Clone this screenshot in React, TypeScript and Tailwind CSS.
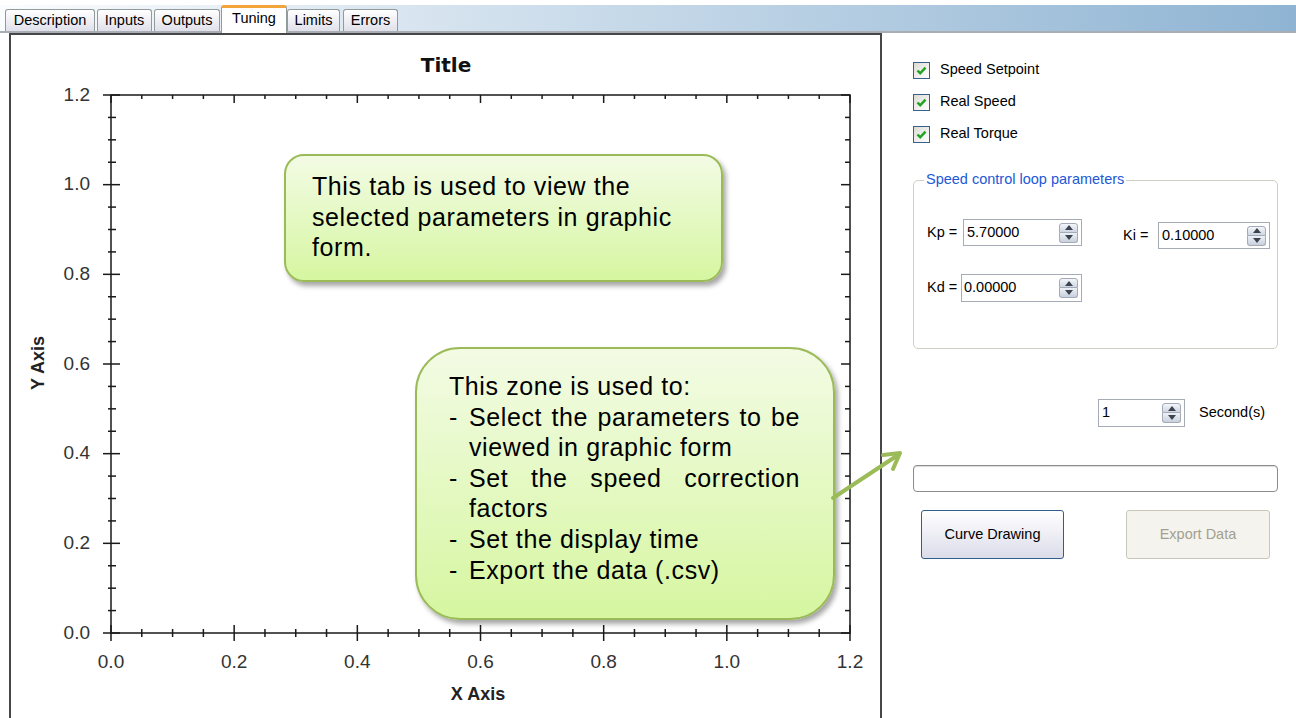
import React from "react";

const F = "font-['Liberation_Sans',Arial,sans-serif]";

const xs = Array.from({ length: 25 }, (_, j) => 111 + (j * 739) / 24);
const ys = Array.from({ length: 25 }, (_, j) => 633 - (j * 538) / 24);
const labels = ["0.0", "0.2", "0.4", "0.6", "0.8", "1.0", "1.2"];

function Chart() {
  return (
    <svg width={869} height={696} viewBox="11 35 869 696" className="block">
      <g stroke="#1a1a1a" strokeWidth={1.5} fill="none">
        <rect x={111} y={95} width={739} height={538} />
        {ys.map((y, j) =>
          j % 4 === 0 ? (
            <g key={"y" + j}>
              <line x1={103} x2={120} y1={y} y2={y} />
              <line x1={841} x2={850} y1={y} y2={y} />
            </g>
          ) : (
            <g key={"y" + j}>
              <line x1={108} x2={116} y1={y} y2={y} />
              <line x1={845} x2={850} y1={y} y2={y} />
            </g>
          )
        )}
        {xs.map((x, j) =>
          j % 4 === 0 ? (
            <g key={"x" + j}>
              <line x1={x} x2={x} y1={625} y2={641} />
              <line x1={x} x2={x} y1={95} y2={103} />
            </g>
          ) : (
            <g key={"x" + j}>
              <line x1={x} x2={x} y1={629} y2={637} />
              <line x1={x} x2={x} y1={95} y2={99} />
            </g>
          )
        )}
      </g>
      <g fill="#333" fontFamily="'Liberation Sans', Arial, sans-serif" fontSize={19}>
        {labels.map((t, i) => (
          <text key={"ly" + i} x={90} y={ys[i * 4] + 5.5} textAnchor="end">
            {t}
          </text>
        ))}
        {labels.map((t, i) => (
          <text key={"lx" + i} x={xs[i * 4]} y={668} textAnchor="middle">
            {t}
          </text>
        ))}
      </g>
      <text x={446} y={72} textAnchor="middle" fontFamily="'DejaVu Sans', sans-serif" fontWeight="bold" fontSize={20} fill="#111">
        Title
      </text>
      <text x={478} y={700} textAnchor="middle" fontFamily="'Liberation Sans', Arial, sans-serif" fontWeight="bold" fontSize={18} fill="#222">
        X Axis
      </text>
      <text x={44} y={363} textAnchor="middle" transform="rotate(-90 44 363)" fontFamily="'Liberation Sans', Arial, sans-serif" fontWeight="bold" fontSize={18} fill="#222">
        Y Axis
      </text>
    </svg>
  );
}

function Spin() {
  return (
    <div className="flex flex-col w-[19px] h-[20px]">
      <div className="h-[10px] flex items-center justify-center rounded-t-[3px] border border-[#a3aab8] bg-linear-to-b from-[#f4f6fa] to-[#cfd6e2]">
        <svg width="8" height="5" viewBox="0 0 8 5">
          <polygon points="4,0 8,5 0,5" fill="#3b4250" />
        </svg>
      </div>
      <div className="h-[10px] flex items-center justify-center rounded-b-[3px] border border-t-0 border-[#a3aab8] bg-linear-to-b from-[#eef1f6] to-[#c9d1de]">
        <svg width="8" height="5" viewBox="0 0 8 5">
          <polygon points="0,0 8,0 4,5" fill="#3b4250" />
        </svg>
      </div>
    </div>
  );
}

function Check({ label }: { label: string }) {
  return (
    <div className="h-[32px] flex items-center">
      <div className="w-[17px] h-[17px] border border-[#35618c] bg-linear-to-br from-[#dcdcd6] to-white flex items-center justify-center">
        <svg width="13" height="13" viewBox="0 0 13 13">
          <path d="M2.5 6.5 L5.2 9.2 L10.5 3.6" stroke="#21a121" strokeWidth="2.4" fill="none" />
        </svg>
      </div>
      <span className="ml-[10px]">{label}</span>
    </div>
  );
}

export default function App() {
  return (
    <div className={`${F} relative w-[1296px] h-[718px] overflow-hidden bg-white text-black text-[14.5px]`}>
      {/* tab strip */}
      <div className="h-[33px] pt-[5px]">
        <div className="h-[28px] bg-linear-to-r from-[#fbfcfd] to-[#8fb4d3] border-b-2 border-[#a9aeb4] flex items-end pl-[5px]">
          <div className="w-[90px] h-[22px] mr-[2px] border border-b-0 border-[#919b9c] rounded-t-[3px] bg-linear-to-b from-white to-[#e0e0ea] flex items-center justify-center">Description</div>
          <div className="w-[55px] h-[22px] mr-[2px] border border-b-0 border-[#919b9c] rounded-t-[3px] bg-linear-to-b from-white to-[#e0e0ea] flex items-center justify-center">Inputs</div>
          <div className="w-[66px] h-[22px] mr-[1px] border border-b-0 border-[#919b9c] rounded-t-[3px] bg-linear-to-b from-white to-[#e0e0ea] flex items-center justify-center">Outputs</div>
          <div className="w-[66px] h-[28px] -mb-[2px] relative border border-b-0 border-t-[3px] border-[#919b9c] border-t-[#f2a33a] rounded-t-[3px] bg-white flex items-center justify-center pb-[4px]">Tuning</div>
          <div className="w-[53px] h-[22px] mr-[3px] border border-b-0 border-[#919b9c] rounded-t-[3px] bg-linear-to-b from-white to-[#e0e0ea] flex items-center justify-center">Limits</div>
          <div className="w-[55px] h-[22px] border border-b-0 border-[#919b9c] rounded-t-[3px] bg-linear-to-b from-white to-[#e0e0ea] flex items-center justify-center">Errors</div>
        </div>
      </div>

      <div className="flex">
        {/* chart panel */}
        <div className="ml-[9px] w-[873px] h-[700px] border-2 border-[#474747]">
          <Chart />
        </div>

        {/* right panel */}
        <div className="ml-[31px] w-[365px] flex flex-col pt-[21px]">
          <Check label="Speed Setpoint" />
          <Check label="Real Speed" />
          <Check label="Real Torque" />

          <div className="mt-[30px] h-[169px] border border-[#cfcfc3] rounded-[5px] relative">
            <span className="absolute -top-[10px] left-[10px] bg-white px-[2px] leading-[17px] text-[#2158d6]">
              Speed control loop parameters
            </span>
            <div className="flex items-start pt-[38px] pl-[13px]">
              <div className="flex items-center">
                <span className="w-[36px]">Kp =</span>
                <div className="w-[119px] h-[27px] border border-[#a5acb5] bg-white flex items-center pl-[3px] pr-[3px]">
                  <span className="flex-1">5.70000</span>
                  <Spin />
                </div>
              </div>
              <div className="flex items-center ml-[41px] mt-[3px]">
                <span className="w-[35px]">Ki =</span>
                <div className="w-[112px] h-[27px] border border-[#a5acb5] bg-white flex items-center pl-[3px] pr-[3px]">
                  <span className="flex-1">0.10000</span>
                  <Spin />
                </div>
              </div>
            </div>
            <div className="flex items-center mt-[25px] pl-[13px]">
              <span className="w-[34px]">Kd =</span>
              <div className="w-[121px] h-[28px] border border-[#a5acb5] bg-white flex items-center pl-[2px] pr-[3px]">
                <span className="flex-1">0.00000</span>
                <Spin />
              </div>
            </div>
          </div>

          <div className="mt-[50px] pl-[185px] flex items-center">
            <div className="w-[87px] h-[28px] border border-[#a5acb5] bg-white flex items-center pl-[3px] pr-[3px]">
              <span className="flex-1">1</span>
              <Spin />
            </div>
            <span className="ml-[14px]">Second(s)</span>
          </div>

          <div className="mt-[38px] h-[27px] border border-[#8c8c8c] rounded-[4px] bg-white shadow-[inset_0_1px_1px_rgba(0,0,0,0.15)]" />

          <div className="mt-[18px] flex">
            <button className="ml-[8px] w-[143px] h-[49px] rounded-[3px] border border-[#2f5e8e] bg-linear-to-b from-white to-[#dcdcea]">
              Curve Drawing
            </button>
            <button className="ml-[62px] w-[144px] h-[49px] rounded-[3px] border border-[#c9c7ba] bg-[#f4f3ee] text-[#a3a08f]">
              Export Data
            </button>
          </div>
        </div>
      </div>

      {/* callouts */}
      <div className="absolute left-[284px] top-[154px] w-[439px] h-[128px] rounded-[20px] border-2 border-[#9bbb59] bg-linear-to-b from-[#f3fbe4] to-[#d6f6a0] shadow-[3px_4px_5px_rgba(0,0,0,0.35)] pt-[15px] pl-[26px] text-[25px] leading-[30.5px] tracking-[0.6px]">
        This tab is used to view the
        <br />
        selected parameters in graphic
        <br />
        form.
      </div>

      <div className="absolute left-[415px] top-[347px] w-[420px] h-[273px] rounded-[45px] border-2 border-[#9bbb59] bg-linear-to-b from-[#f3fbe4] to-[#d6f6a0] shadow-[3px_4px_5px_rgba(0,0,0,0.35)] pt-[22px] pl-[32px] text-[25px] leading-[30.6px] tracking-[0.6px]">
        <div>This zone is used to:</div>
        {["Select the parameters to be viewed in graphic form", "Set the speed correction factors", "Set the display time", "Export the data (.csv)"].map((t) => (
          <div key={t} className="flex">
            <span className="w-[20px] shrink-0">-</span>
            <span className="w-[331px] text-justify">{t}</span>
          </div>
        ))}
      </div>

      {/* arrow */}
      <svg className="absolute left-0 top-0 pointer-events-none" width={1296} height={718} viewBox="0 0 1296 718">
        <g stroke="#9bbb59" strokeWidth={4} strokeLinecap="round" fill="none">
          <line x1={833} y1={498} x2={898} y2={455} />
          <polyline points="883,455 900,453 893,469" strokeLinejoin="round" />
        </g>
      </svg>
    </div>
  );
}
